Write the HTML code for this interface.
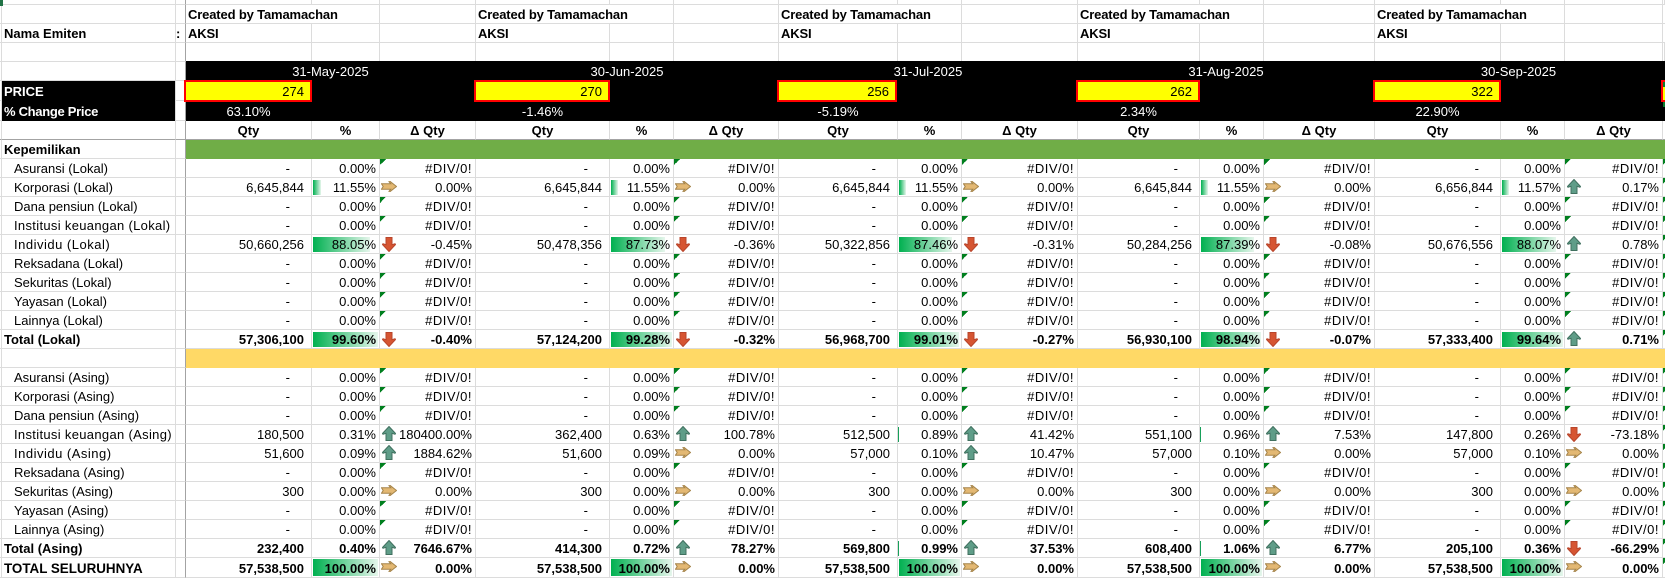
<!DOCTYPE html>
<html><head><meta charset="utf-8"><title>AKSI</title>
<style>
html,body{margin:0;padding:0;background:#fff}
body{width:1665px;height:578px;overflow:hidden;position:relative;font:13px "Liberation Sans",Arial,sans-serif;color:#000}
table{position:absolute;left:0;top:0;width:1665px;table-layout:fixed;border-collapse:separate;border-spacing:0}
tr{height:19px}
td{box-sizing:border-box;padding:2px 3px 0 0;border-right:1px solid #dcdcdc;border-bottom:1px solid #dcdcdc;text-align:right;white-space:nowrap;line-height:16px;vertical-align:middle;position:relative;overflow:hidden}
td:nth-child(3){border-right-color:#a3a3a3;padding-right:0}
td:nth-child(1){padding-right:0}
td:nth-child(2){text-align:left;padding-left:12px;padding-right:0}
td:nth-child(3n+4){padding-right:7px}
td:last-child{border-right:0;padding-right:0}
td.n{padding-right:21px}
tr.z{height:5px}tr.z td{line-height:0;font-size:0;padding-top:0}
tr.h td{border-bottom-color:#a3a3a3;font-weight:bold;text-align:center;padding-right:0}
tr.b td{font-weight:bold}
td.l,tr td.l{padding-left:2px;font-weight:bold}
td.c{text-align:left;padding-left:2px!important;padding-right:0!important;font-weight:bold;letter-spacing:-.15px}
td.t{letter-spacing:.5px;background:linear-gradient(135deg,#007f1e 50%,transparent 50%) 0 0/6px 6px no-repeat}
td.d{background:linear-gradient(90deg,#00b050,#e6f6ec) 1px 2px/var(--w) 15px no-repeat}
td.e{background:linear-gradient(#17a05a,#17a05a) 0 2px/1px 15px no-repeat}
tr.T{height:20px}tr.T td.d{background-size:var(--w) 17px;background-position:1px 1px}
tr.T td.l{font-size:13.4px}
td.g{background:#70ad47;border:0;padding:0}
td.y{background:#ffd966;border:0;padding:0}
td.s{letter-spacing:.5px}
td.q{letter-spacing:.32px}
svg{position:absolute;display:block;overflow:visible}
.u{left:2px;top:1px;width:14px;height:15px;fill:#5f9d88;stroke:#40705f}
.w{left:2px;top:2px;width:14px;height:15px;fill:#d65532;stroke:#b8452b}
.r{left:1px;top:3px;width:16px;height:11px;fill:#e3b873;stroke:#a5844a}
.k{position:absolute;background:#000}
.o{position:absolute;color:#fff;text-align:center;line-height:20px;height:20px;margin-top:1px}
.p{position:absolute;top:80px;height:22px;box-sizing:border-box;border:2px solid #f00;background:#ff0;text-align:right;padding-right:6px;line-height:20px}
.f{position:absolute;color:#fff;font-weight:bold;left:4px;line-height:20px;margin-top:1px}
</style></head><body>
<svg width="0" height="0" style="position:absolute"><defs>
<symbol id="u" viewBox="0 0 14 15"><path d="M7 .5 13.5 7.5 13 8.3 10 7.3V14.5H4V7.3L1 8.3 .5 7.5Z"/></symbol>
<symbol id="w" viewBox="0 0 14 15"><path d="M7 14.5 13.5 7.5 13 6.7 10 7.7V.5H4V7.7L1 6.7 .5 7.5Z"/></symbol>
<symbol id="r" viewBox="0 0 16 11"><path d="M.5 2.8H9.8L8 .7 9.2 .5 15.5 5.5 9.2 10.5 8 10.3 9.8 8.2H.5L2.2 5.5Z"/></symbol>
</defs></svg>
<table>
<colgroup><col width="2"><col width="174"><col width="10"><col width="126"><col width="68"><col width="96"><col width="134"><col width="64"><col width="105"><col width="119"><col width="64"><col width="116"><col width="122"><col width="64"><col width="111"><col width="126"><col width="64"><col width="98"><col width="2"></colgroup>
<tr class="z"><td><td><td><td><td><td><td><td><td><td><td><td><td><td><td><td><td><td><td><td></tr>
<tr><td><td><td><td class="c" colspan="2">Created by Tamamachan<td><td class="c" colspan="2">Created by Tamamachan<td><td class="c" colspan="2">Created by Tamamachan<td><td class="c" colspan="2">Created by Tamamachan<td><td class="c" colspan="2">Created by Tamamachan<td><td></tr>
<tr><td><td class="l">Nama Emiten<td style="font-weight:bold;text-align:left">:<td class="c">AKSI<td><td><td class="c">AKSI<td><td><td class="c">AKSI<td><td><td class="c">AKSI<td><td><td class="c">AKSI<td><td><td></tr>
<tr><td><td><td><td><td><td><td><td><td><td><td><td><td><td><td><td><td><td><td><td></tr>
<tr><td><td><td><td colspan="16"></tr>
<tr style="height:20px"><td><td><td><td colspan="16"></tr>
<tr style="height:20px"><td><td><td><td colspan="16"></tr>
<tr class="h"><td><td><td><td>Qty<td>%<td>Δ Qty<td>Qty<td>%<td>Δ Qty<td>Qty<td>%<td>Δ Qty<td>Qty<td>%<td>Δ Qty<td>Qty<td>%<td>Δ Qty<td></tr>
<tr><td><td class="l">Kepemilikan<td><td class="g" colspan="16"></tr>
<tr><td><td>Asuransi (Lokal)<td><td class="n">-<td>0.00%<td class="t">#DIV/0!<td class="n">-<td>0.00%<td class="t">#DIV/0!<td class="n">-<td>0.00%<td class="t">#DIV/0!<td class="n">-<td>0.00%<td class="t">#DIV/0!<td class="n">-<td>0.00%<td class="t">#DIV/0!<td class="t"></tr>
<tr><td><td>Korporasi (Lokal)<td><td>6,645,844<td class="d" style="--w:8px">11.55%<td><svg class="r"><use href="#r"/></svg>0.00%<td>6,645,844<td class="d" style="--w:7px">11.55%<td><svg class="r"><use href="#r"/></svg>0.00%<td>6,645,844<td class="d" style="--w:7px">11.55%<td><svg class="r"><use href="#r"/></svg>0.00%<td>6,645,844<td class="d" style="--w:7px">11.55%<td><svg class="r"><use href="#r"/></svg>0.00%<td>6,656,844<td class="d" style="--w:7px">11.57%<td><svg class="u"><use href="#u"/></svg>0.17%<td class="t"></tr>
<tr><td><td>Dana pensiun (Lokal)<td><td class="n">-<td>0.00%<td class="t">#DIV/0!<td class="n">-<td>0.00%<td class="t">#DIV/0!<td class="n">-<td>0.00%<td class="t">#DIV/0!<td class="n">-<td>0.00%<td class="t">#DIV/0!<td class="n">-<td>0.00%<td class="t">#DIV/0!<td class="t"></tr>
<tr><td><td class="q">Institusi keuangan (Lokal)<td><td class="n">-<td>0.00%<td class="t">#DIV/0!<td class="n">-<td>0.00%<td class="t">#DIV/0!<td class="n">-<td>0.00%<td class="t">#DIV/0!<td class="n">-<td>0.00%<td class="t">#DIV/0!<td class="n">-<td>0.00%<td class="t">#DIV/0!<td class="t"></tr>
<tr><td><td class="s">Individu (Lokal)<td><td>50,660,256<td class="d" style="--w:57px">88.05%<td><svg class="w"><use href="#w"/></svg>-0.45%<td>50,478,356<td class="d" style="--w:54px">87.73%<td><svg class="w"><use href="#w"/></svg>-0.36%<td>50,322,856<td class="d" style="--w:53px">87.46%<td><svg class="w"><use href="#w"/></svg>-0.31%<td>50,284,256<td class="d" style="--w:53px">87.39%<td><svg class="w"><use href="#w"/></svg>-0.08%<td>50,676,556<td class="d" style="--w:54px">88.07%<td><svg class="u"><use href="#u"/></svg>0.78%<td class="t"></tr>
<tr><td><td>Reksadana (Lokal)<td><td class="n">-<td>0.00%<td class="t">#DIV/0!<td class="n">-<td>0.00%<td class="t">#DIV/0!<td class="n">-<td>0.00%<td class="t">#DIV/0!<td class="n">-<td>0.00%<td class="t">#DIV/0!<td class="n">-<td>0.00%<td class="t">#DIV/0!<td class="t"></tr>
<tr><td><td>Sekuritas (Lokal)<td><td class="n">-<td>0.00%<td class="t">#DIV/0!<td class="n">-<td>0.00%<td class="t">#DIV/0!<td class="n">-<td>0.00%<td class="t">#DIV/0!<td class="n">-<td>0.00%<td class="t">#DIV/0!<td class="n">-<td>0.00%<td class="t">#DIV/0!<td class="t"></tr>
<tr><td><td>Yayasan (Lokal)<td><td class="n">-<td>0.00%<td class="t">#DIV/0!<td class="n">-<td>0.00%<td class="t">#DIV/0!<td class="n">-<td>0.00%<td class="t">#DIV/0!<td class="n">-<td>0.00%<td class="t">#DIV/0!<td class="n">-<td>0.00%<td class="t">#DIV/0!<td class="t"></tr>
<tr><td><td>Lainnya (Lokal)<td><td class="n">-<td>0.00%<td class="t">#DIV/0!<td class="n">-<td>0.00%<td class="t">#DIV/0!<td class="n">-<td>0.00%<td class="t">#DIV/0!<td class="n">-<td>0.00%<td class="t">#DIV/0!<td class="n">-<td>0.00%<td class="t">#DIV/0!<td class="t"></tr>
<tr class="b"><td><td class="l">Total (Lokal)<td><td>57,306,100<td class="d" style="--w:65px">99.60%<td><svg class="w"><use href="#w"/></svg>-0.40%<td>57,124,200<td class="d" style="--w:61px">99.28%<td><svg class="w"><use href="#w"/></svg>-0.32%<td>56,968,700<td class="d" style="--w:60px">99.01%<td><svg class="w"><use href="#w"/></svg>-0.27%<td>56,930,100<td class="d" style="--w:60px">98.94%<td><svg class="w"><use href="#w"/></svg>-0.07%<td>57,333,400<td class="d" style="--w:61px">99.64%<td><svg class="u"><use href="#u"/></svg>0.71%<td class="t"></tr>
<tr><td><td><td><td class="y" colspan="16"></tr>
<tr><td><td>Asuransi (Asing)<td><td class="n">-<td>0.00%<td class="t">#DIV/0!<td class="n">-<td>0.00%<td class="t">#DIV/0!<td class="n">-<td>0.00%<td class="t">#DIV/0!<td class="n">-<td>0.00%<td class="t">#DIV/0!<td class="n">-<td>0.00%<td class="t">#DIV/0!<td class="t"></tr>
<tr><td><td>Korporasi (Asing)<td><td class="n">-<td>0.00%<td class="t">#DIV/0!<td class="n">-<td>0.00%<td class="t">#DIV/0!<td class="n">-<td>0.00%<td class="t">#DIV/0!<td class="n">-<td>0.00%<td class="t">#DIV/0!<td class="n">-<td>0.00%<td class="t">#DIV/0!<td class="t"></tr>
<tr><td><td>Dana pensiun (Asing)<td><td class="n">-<td>0.00%<td class="t">#DIV/0!<td class="n">-<td>0.00%<td class="t">#DIV/0!<td class="n">-<td>0.00%<td class="t">#DIV/0!<td class="n">-<td>0.00%<td class="t">#DIV/0!<td class="n">-<td>0.00%<td class="t">#DIV/0!<td class="t"></tr>
<tr><td><td class="q">Institusi keuangan (Asing)<td><td>180,500<td>0.31%<td><svg class="u"><use href="#u"/></svg>180400.00%<td>362,400<td>0.63%<td><svg class="u"><use href="#u"/></svg>100.78%<td>512,500<td class="e">0.89%<td><svg class="u"><use href="#u"/></svg>41.42%<td>551,100<td class="e">0.96%<td><svg class="u"><use href="#u"/></svg>7.53%<td>147,800<td>0.26%<td><svg class="w"><use href="#w"/></svg>-73.18%<td class="t"></tr>
<tr><td><td class="s">Individu (Asing)<td><td>51,600<td>0.09%<td><svg class="u"><use href="#u"/></svg>1884.62%<td>51,600<td>0.09%<td><svg class="r"><use href="#r"/></svg>0.00%<td>57,000<td>0.10%<td><svg class="u"><use href="#u"/></svg>10.47%<td>57,000<td>0.10%<td><svg class="r"><use href="#r"/></svg>0.00%<td>57,000<td>0.10%<td><svg class="r"><use href="#r"/></svg>0.00%<td class="t"></tr>
<tr><td><td>Reksadana (Asing)<td><td class="n">-<td>0.00%<td class="t">#DIV/0!<td class="n">-<td>0.00%<td class="t">#DIV/0!<td class="n">-<td>0.00%<td class="t">#DIV/0!<td class="n">-<td>0.00%<td class="t">#DIV/0!<td class="n">-<td>0.00%<td class="t">#DIV/0!<td class="t"></tr>
<tr><td><td>Sekuritas (Asing)<td><td>300<td>0.00%<td><svg class="r"><use href="#r"/></svg>0.00%<td>300<td>0.00%<td><svg class="r"><use href="#r"/></svg>0.00%<td>300<td>0.00%<td><svg class="r"><use href="#r"/></svg>0.00%<td>300<td>0.00%<td><svg class="r"><use href="#r"/></svg>0.00%<td>300<td>0.00%<td><svg class="r"><use href="#r"/></svg>0.00%<td class="t"></tr>
<tr><td><td>Yayasan (Asing)<td><td class="n">-<td>0.00%<td class="t">#DIV/0!<td class="n">-<td>0.00%<td class="t">#DIV/0!<td class="n">-<td>0.00%<td class="t">#DIV/0!<td class="n">-<td>0.00%<td class="t">#DIV/0!<td class="n">-<td>0.00%<td class="t">#DIV/0!<td class="t"></tr>
<tr><td><td>Lainnya (Asing)<td><td class="n">-<td>0.00%<td class="t">#DIV/0!<td class="n">-<td>0.00%<td class="t">#DIV/0!<td class="n">-<td>0.00%<td class="t">#DIV/0!<td class="n">-<td>0.00%<td class="t">#DIV/0!<td class="n">-<td>0.00%<td class="t">#DIV/0!<td class="t"></tr>
<tr class="b"><td><td class="l">Total (Asing)<td><td>232,400<td>0.40%<td><svg class="u"><use href="#u"/></svg>7646.67%<td>414,300<td>0.72%<td><svg class="u"><use href="#u"/></svg>78.27%<td>569,800<td class="e">0.99%<td><svg class="u"><use href="#u"/></svg>37.53%<td>608,400<td class="e">1.06%<td><svg class="u"><use href="#u"/></svg>6.77%<td>205,100<td>0.36%<td><svg class="w"><use href="#w"/></svg>-66.29%<td class="t"></tr>
<tr class="b T"><td><td class="l">TOTAL SELURUHNYA<td><td>57,538,500<td class="d" style="--w:65px">100.00%<td><svg class="r"><use href="#r"/></svg>0.00%<td>57,538,500<td class="d" style="--w:61px">100.00%<td><svg class="r"><use href="#r"/></svg>0.00%<td>57,538,500<td class="d" style="--w:61px">100.00%<td><svg class="r"><use href="#r"/></svg>0.00%<td>57,538,500<td class="d" style="--w:61px">100.00%<td><svg class="r"><use href="#r"/></svg>0.00%<td>57,538,500<td class="d" style="--w:61px">100.00%<td><svg class="r"><use href="#r"/></svg>0.00%<td class="t"></tr>
</table>
<div class="k" style="left:186px;top:61px;width:1479px;height:60px"></div>
<div class="k" style="left:2px;top:81px;width:173px;height:40px"></div>
<div class="f" style="top:81px">PRICE</div>
<div class="f" style="top:101px;letter-spacing:-.3px">% Change Price</div>
<div class="o" style="left:186px;top:61px;width:289px">31-May-2025</div>
<div class="o" style="left:476px;top:61px;width:302px">30-Jun-2025</div>
<div class="o" style="left:779px;top:61px;width:298px">31-Jul-2025</div>
<div class="o" style="left:1078px;top:61px;width:296px">31-Aug-2025</div>
<div class="o" style="left:1375px;top:61px;width:287px">30-Sep-2025</div>
<div class="p" style="left:184px;width:128px">274</div>
<div class="p" style="left:474px;width:136px">270</div>
<div class="p" style="left:777px;width:120px">256</div>
<div class="p" style="left:1076px;width:124px">262</div>
<div class="p" style="left:1373px;width:128px">322</div>
<div class="p" style="left:1661px;width:8px;padding:0"></div>
<div style="position:absolute;left:1663px;top:82px;width:2px;height:5px;background:#0a7d2c"></div>
<div style="position:absolute;left:1663px;top:102px;width:2px;height:5px;background:#0a7d2c"></div>
<div class="o" style="left:186px;top:101px;width:125px">63.10%</div>
<div class="o" style="left:476px;top:101px;width:133px">-1.46%</div>
<div class="o" style="left:779px;top:101px;width:118px">-5.19%</div>
<div class="o" style="left:1078px;top:101px;width:121px">2.34%</div>
<div class="o" style="left:1375px;top:101px;width:125px">22.90%</div>
<div style="position:absolute;left:0;top:0;width:3px;height:6px;background:#217346"></div>
</body></html>
